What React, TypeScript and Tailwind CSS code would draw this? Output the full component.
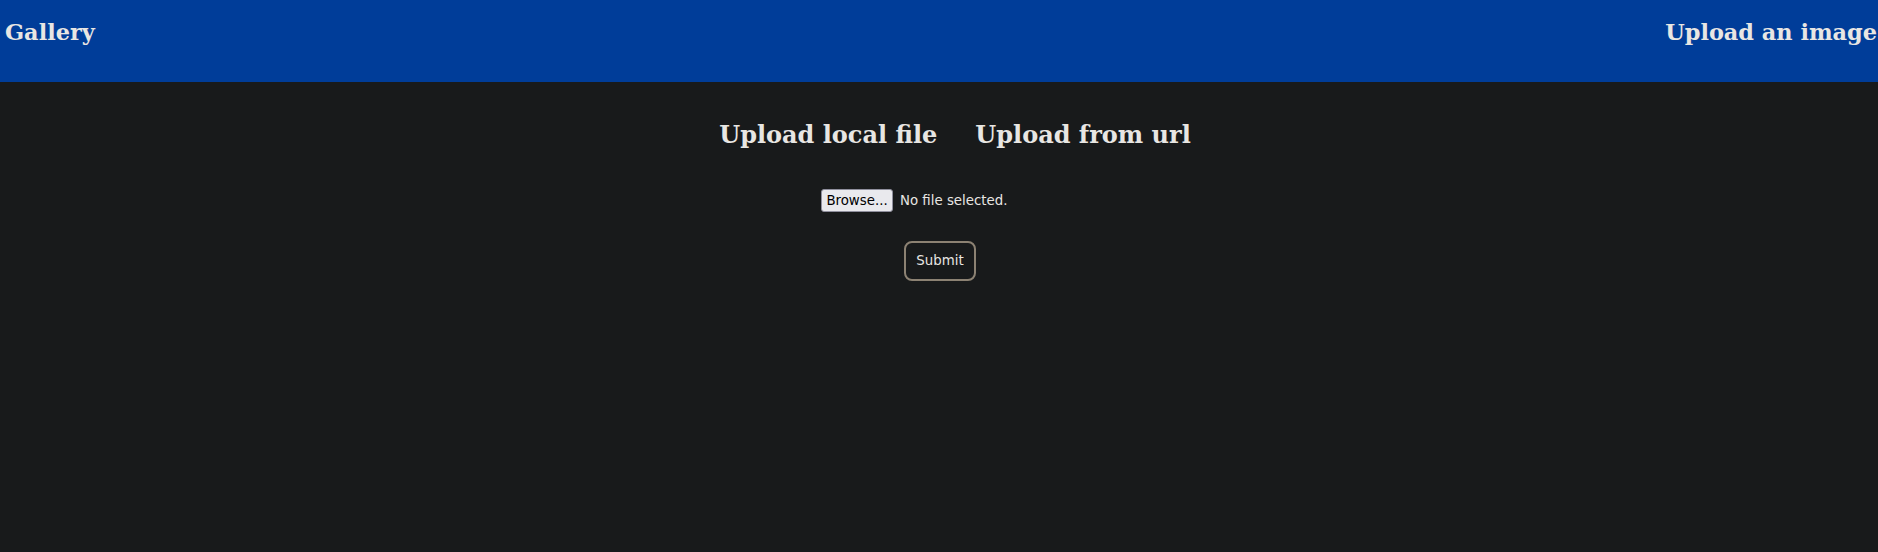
import React from "react";

const serif = "font-['DejaVu_Serif','Liberation_Serif',serif]";
const sans = "font-['DejaVu_Sans','Liberation_Sans',sans-serif]";

export default function App() {
  return (
    <div className="min-h-[552px] w-full bg-[#181a1b] text-[#e8e6e3]">
      <header className="flex h-[82px] items-start justify-between bg-[#003d99] pl-[5px] pr-[1px] pt-[19px]">
        <span className={`${serif} text-[22.4px] font-bold leading-[26px]`}>Gallery</span>
        <span className={`${serif} text-[22.4px] font-bold leading-[26px]`}>Upload an image</span>
      </header>

      <main className="flex flex-col items-center">
        <nav className="mt-[39px] flex gap-[38px] pl-[32px]">
          <span className={`${serif} text-[24px] font-bold leading-[28px]`}>Upload local file</span>
          <span className={`${serif} text-[24px] font-bold leading-[28px]`}>Upload from url</span>
        </nav>

        <div className={`${sans} mt-[40px] flex w-[236px] items-center gap-[7px] text-[13.33px]`}>
          <button className="h-[23px] w-[72px] rounded-[3px] border border-[#8f8f9d] bg-[#e9e9ed] text-[13.33px] leading-none text-black">
            Browse...
          </button>
          <span>No file selected.</span>
        </div>

        <button
          className={`${sans} ml-[2px] mt-[29px] h-[40px] w-[72px] rounded-[8px] border-2 border-[#8c8273] text-[13.33px] text-[#e8e6e3]`}
        >
          Submit
        </button>
      </main>
    </div>
  );
}
